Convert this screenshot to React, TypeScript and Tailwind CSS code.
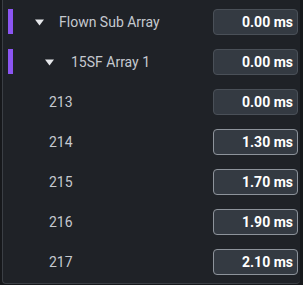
import React from 'react'

type Row = {
  label: string
  value: string
  depth: number
  group?: boolean
  active?: boolean
}

const ROWS: Row[] = [
  { label: 'Flown Sub Array', value: '0.00 ms', depth: 0, group: true },
  { label: '15SF Array 1', value: '0.00 ms', depth: 1, group: true },
  { label: '213', value: '0.00 ms', depth: 2 },
  { label: '214', value: '1.30 ms', depth: 2, active: true },
  { label: '215', value: '1.70 ms', depth: 2, active: true },
  { label: '216', value: '1.90 ms', depth: 2, active: true },
  { label: '217', value: '2.10 ms', depth: 2, active: true },
]

const Caret = () => (
  <svg width="9" height="7" viewBox="0 0 9 7" className="shrink-0">
    <path d="M0 0.5 L9 0.5 L4.5 6.5 Z" fill="#e6e8eb" />
  </svg>
)

export default function App() {
  return (
    <div className="w-[303px] h-[285px] bg-[#16181b] font-['Roboto',sans-serif]">
      <div className="ml-[2px] w-[298px] h-[284px] pt-[2px] bg-[#1f2227] border-l border-b border-[#3b3f45] rounded-b-[4px]">
        {ROWS.map((row) => (
          <div key={row.label} className="flex items-center h-[40px] pr-[2px]">
            <div className="w-[5px] ml-[5px] h-[25px] -mt-[1px]">
              {row.group && <div className="w-[5px] h-[25px] bg-[#8b55f2]" />}
            </div>
            {row.depth === 0 && (
              <div className="flex items-center ml-[22px] gap-[15px]">
                <Caret />
                <span className="text-[14px] text-[#c5c9cf]">{row.label}</span>
              </div>
            )}
            {row.depth === 1 && (
              <div className="flex items-center ml-[32px] gap-[17px]">
                <Caret />
                <span className="text-[14px] text-[#c5c9cf]">{row.label}</span>
              </div>
            )}
            {row.depth === 2 && (
              <span className="ml-[36px] text-[14px] text-[#c5c9cf]">{row.label}</span>
            )}
            <div
              className={`ml-auto w-[85px] h-[26px] rounded-[4px] bg-[#343a42] border flex items-center justify-end pr-[4px] text-[14px] font-bold text-white ${
                row.active ? 'border-[#8d939b]' : 'border-[#4a5058]'
              }`}
            >
              {row.value}
            </div>
          </div>
        ))}
      </div>
    </div>
  )
}
